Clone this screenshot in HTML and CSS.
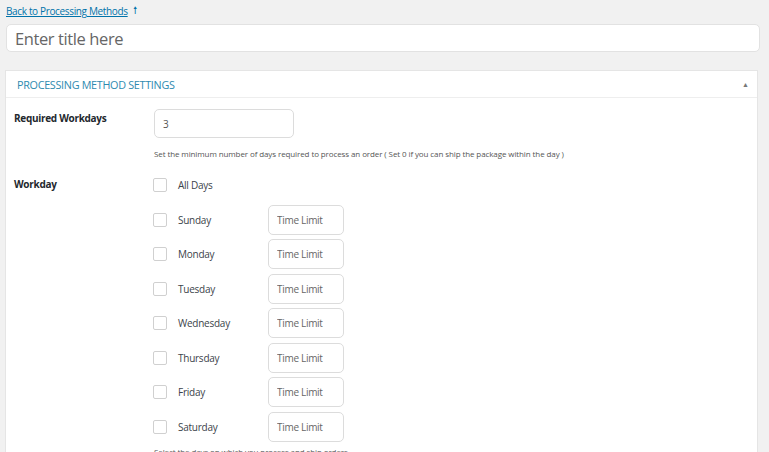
FILE: index.html
```html
<!DOCTYPE html>
<html>
<head>
<meta charset="utf-8">
<link rel="stylesheet" href="styles.css">
</head>
<body>
<div class="wrap">
  <div class="back"><a href="#">Back to Processing Methods</a> <span class="up">&#x1F815;</span></div>
  <div class="title"><input type="text" placeholder="Enter title here"></div>
  <div class="panel">
    <div class="panel-head">
      <span class="head-title">PROCESSING METHOD SETTINGS</span>
      <span class="toggle">&#9650;</span>
    </div>
    <div class="panel-body">
      <div class="field">
        <div class="label">Required Workdays</div>
        <div class="control">
          <input class="num" type="text" value="3">
          <p class="desc">Set the minimum number of days required to process an order ( Set 0 if you can ship the package within the day )</p>
        </div>
      </div>
      <div class="field">
        <div class="label label-wd">Workday</div>
        <div class="control">
          <div class="day"><span class="cb"></span><span class="dname">All Days</span></div>
          <div class="day"><span class="cb"></span><span class="dname">Sunday</span><input class="tl" type="text" placeholder="Time Limit"></div>
          <div class="day"><span class="cb"></span><span class="dname">Monday</span><input class="tl" type="text" placeholder="Time Limit"></div>
          <div class="day"><span class="cb"></span><span class="dname">Tuesday</span><input class="tl" type="text" placeholder="Time Limit"></div>
          <div class="day"><span class="cb"></span><span class="dname">Wednesday</span><input class="tl" type="text" placeholder="Time Limit"></div>
          <div class="day"><span class="cb"></span><span class="dname">Thursday</span><input class="tl" type="text" placeholder="Time Limit"></div>
          <div class="day"><span class="cb"></span><span class="dname">Friday</span><input class="tl" type="text" placeholder="Time Limit"></div>
          <div class="day"><span class="cb"></span><span class="dname">Saturday</span><input class="tl" type="text" placeholder="Time Limit"></div>
          <p class="desc desc2">Select the days on which you process and ship orders</p>
        </div>
      </div>
    </div>
  </div>
</div>
</body>
</html>
```
FILE: styles.css
```css
html, body {
  margin: 0;
  padding: 0;
  background: #f1f1f1;
  font-family: "Open Sans", "Noto Sans", sans-serif;
  color: #23282d;
  overflow: hidden;
  height: 452px;
}
.wrap {
  padding: 0 9px 0 6px;
}
.back {
  height: 22px;
  display: flex;
  align-items: center;
  font-size: 10px;
  letter-spacing: -0.35px;
}
.back a {
  color: #0073aa;
  text-decoration: underline;
}
.up {
  color: #0073aa;
  font-size: 10px;
  margin-left: 5px;
  font-family: "DejaVu Sans", sans-serif;
}
.title input {
  box-sizing: border-box;
  width: 100%;
  height: 28px;
  margin: 2px 0 0;
  border: 1px solid #e2e2e2;
  border-radius: 5px;
  background: #fff;
  padding: 0 8px;
  font-family: "Open Sans", "Noto Sans", sans-serif;
  font-size: 16.5px;
  letter-spacing: -0.4px;
  outline: none;
}
.title input::placeholder {
  color: #666;
}
.panel {
  margin: 18px 2px 0 -1px;
  background: #fff;
  border: 1px solid #e5e5e5;
  height: 400px;
}
.panel-head {
  height: 26px;
  border-bottom: 1px solid #eeeeee;
  display: flex;
  align-items: center;
  justify-content: space-between;
  padding: 0 8px 0 11px;
}
.head-title {
  font-size: 10.8px;
  color: #2e8ab0;
  letter-spacing: -0.3px;
}
.toggle {
  font-size: 7px;
  color: #777;
}
.panel-body {
  padding: 11px 0 0 8px;
}
.field {
  display: flex;
}
.label {
  width: 140px;
  flex: none;
  font-size: 10px;
  font-weight: 700;
  letter-spacing: -0.3px;
  padding-top: 2px;
}
.label-wd {
  padding-top: 2px;
}
.control {
  flex: 1;
}
.num {
  box-sizing: border-box;
  width: 140px;
  height: 29px;
  border: 1px solid #dcdcdc;
  border-radius: 5px;
  padding: 0 8px;
  font-family: "Open Sans", "Noto Sans", sans-serif;
  font-size: 10px;
  color: #555;
  outline: none;
  display: block;
}
.desc {
  margin: 10px 0 0;
  font-size: 8px;
  color: #555;
  letter-spacing: -0.1px;
  height: 27px;
}
.day {
  display: flex;
  align-items: center;
  height: 30px;
  margin-bottom: 4.5px;
}
.day:first-child {
  height: 20px;
  margin-top: 0;
  margin-bottom: 9.5px;
}
.cb {
  box-sizing: border-box;
  width: 14px;
  height: 14px;
  border: 1px solid #d0d0d0;
  border-radius: 2px;
  background: #fff;
  flex: none;
  margin-left: -1px;
}
.dname {
  width: 90px;
  margin-left: 11px;
  font-size: 10px;
  color: #3c434a;
  letter-spacing: -0.25px;
  flex: none;
}
.tl {
  box-sizing: border-box;
  width: 76px;
  height: 30px;
  border: 1px solid #dcdcdc;
  border-radius: 5px;
  padding: 0 8px;
  font-family: "Open Sans", "Noto Sans", sans-serif;
  font-size: 10px;
  letter-spacing: -0.3px;
  outline: none;
}
.tl::placeholder {
  color: #666;
}
.desc2 {
  margin-top: 2px;
}
```
